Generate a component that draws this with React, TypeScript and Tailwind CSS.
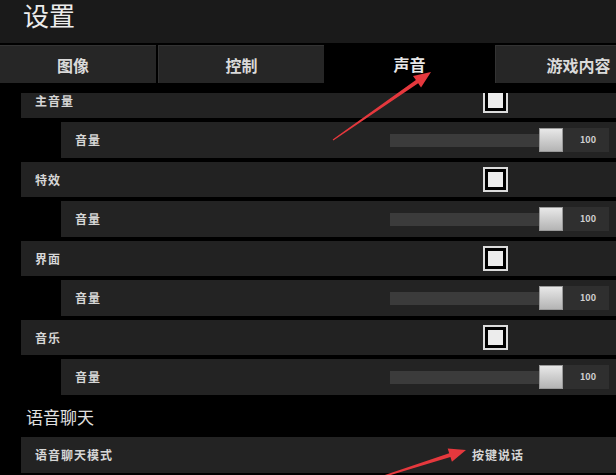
import React from "react";

const tabs = ["图像", "控制", "声音", "游戏内容"];

const channels = ["主音量", "特效", "界面", "音乐"];

// tapered annotation arrow, tail -> tip
function arrowPoints(x1: number, y1: number, x2: number, y2: number) {
  const dx = x2 - x1;
  const dy = y2 - y1;
  const len = Math.hypot(dx, dy);
  const ux = dx / len;
  const uy = dy / len;
  const nx = -uy;
  const ny = ux;
  const head = 17;
  const headW = 7;
  const bx = x2 - ux * head;
  const by = y2 - uy * head;
  const pts = [
    [x1 + nx * 0.6, y1 + ny * 0.6],
    [bx + nx * 2, by + ny * 2],
    [bx + nx * headW, by + ny * headW],
    [x2, y2],
    [bx - nx * headW, by - ny * headW],
    [bx - nx * 2, by - ny * 2],
    [x1 - nx * 0.6, y1 - ny * 0.6],
  ];
  return pts.map((p) => p.join(",")).join(" ");
}

const Checkbox = () => (
  <div className="w-[25px] h-[25px] border-2 border-[#dcdcdc] bg-black p-[3px] shrink-0">
    <div className="w-full h-full bg-[#ececec]" />
  </div>
);

const ChannelRow = ({ label }: { label: string }) => (
  <div className="ml-[21px] h-[35px] bg-[#222222] flex items-center">
    <div className="w-[462px] pl-[14px] text-[12px] font-bold text-[#d6d6d6] tracking-[1px]">{label}</div>
    <Checkbox />
  </div>
);

const VolumeRow = () => (
  <div className="ml-[61px] mt-[4px] h-[36px] bg-[#232323] flex items-center">
    <div className="w-[329px] pl-[14px] text-[12px] font-bold text-[#d6d6d6] tracking-[1px]">音量</div>
    <div className="w-[149px] h-[13px] bg-[#3b3b3b]" />
    <div className="w-[24px] h-[24px] bg-gradient-to-b from-[#e8e8e8] to-[#b4b4b4] border border-[#9a9a9a]" />
    <div className="w-[46px] h-[24px] bg-[#2f2f2f] flex items-center justify-center pl-[4px] text-[9px] font-bold text-[#cfcfcf]">
      100
    </div>
  </div>
);

export default function App() {
  return (
    <div className="relative w-[616px] h-[475px] overflow-hidden bg-black font-['Noto_Sans_CJK_SC','Noto_Sans',sans-serif]">
      <div className="h-[43px] bg-[#1a1a1a] pl-[23px]">
        <div className="text-[26px] leading-[30px] text-[#ececec]">设置</div>
      </div>

      <div className="mt-[2px] h-[38px] flex ml-[-11px]">
        {tabs.map((t, i) => {
          const active = i === 2;
          const w = i === 0 ? "w-[167px] mr-[2px]" : i === 1 ? "w-[166px]" : i === 2 ? "w-[171px]" : "w-[166px]";
          return (
            <div
              key={t}
              className={`${w} shrink-0 h-full flex items-center justify-center text-[16px] font-bold ${
                active ? "bg-black text-[#e6e6e6]" : "bg-[#262626] border-t border-l border-[#333333] text-[#dadada]"
              }`}
            >
              {t}
            </div>
          );
        })}
      </div>

      <div className="mt-[10px] h-[382px] overflow-hidden">
        <div className="mt-[-10px]">
          {channels.map((c, i) => (
            <div key={c} className={i === 0 ? "" : "mt-[4px]"}>
              <ChannelRow label={c} />
              <VolumeRow />
            </div>
          ))}

          <div className="h-[42px] flex items-center pl-[26px] pt-[2px] text-[17px] text-[#e0e0e0]">语音聊天</div>

          <div className="ml-[21px] h-[36px] bg-[#232323] flex items-center">
            <div className="w-[451px] pl-[14px] text-[12px] font-bold text-[#d6d6d6] tracking-[1px]">语音聊天模式</div>
            <div className="text-[12px] font-bold text-[#d6d6d6] tracking-[1px]">按键说话</div>
          </div>
        </div>
      </div>

      <svg className="absolute inset-0 pointer-events-none" width="616" height="475">
        <polygon points={arrowPoints(333, 140, 431, 72)} fill="#e5383d" />
        <polygon points={arrowPoints(372, 480, 466, 450)} fill="#e5383d" />
      </svg>
    </div>
  );
}
